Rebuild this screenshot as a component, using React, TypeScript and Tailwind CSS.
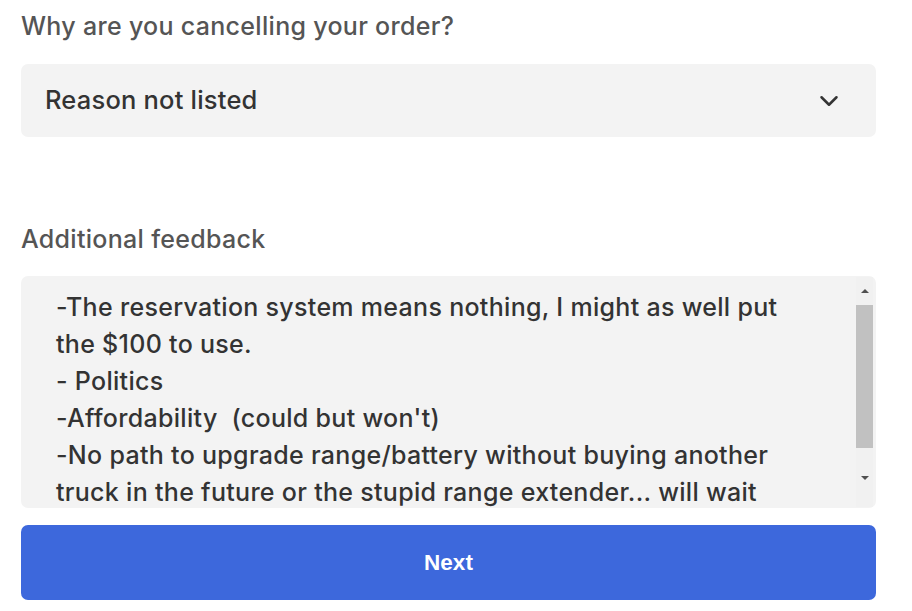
import { ChevronDown } from 'lucide-react';

const feedbackLines = [
  '-The reservation system means nothing, I might as well put',
  'the $100 to use.',
  '- Politics',
  "-Affordability  (could but won't)",
  '-No path to upgrade range/battery without buying another',
  'truck in the future or the stupid range extender... will wait',
];

export default function App() {
  return (
    <div className="w-[912px] h-[611px] bg-white overflow-hidden font-['Inter',sans-serif]">
      <div className="ml-[21px] w-[855px] pt-[6px]">
        <label className="block text-[25px] font-medium tracking-[0.3px] leading-[40px] text-[#555555]">
          Why are you cancelling your order?
        </label>

        <div className="mt-[18px] h-[73px] bg-[#f3f3f3] rounded-[7px] flex items-center justify-between pl-[24px] pr-[32px]">
          <span className="text-[25.5px] font-medium tracking-[0.2px] text-[#333333]">Reason not listed</span>
          <ChevronDown size={30} strokeWidth={2} className="text-[#333333]" />
        </div>

        <label className="block mt-[82px] text-[25px] font-medium tracking-[0.3px] leading-[40px] text-[#555555]">
          Additional feedback
        </label>

        <div className="mt-[17px] h-[232px] bg-[#f3f3f3] rounded-[7px] flex overflow-hidden">
          <div className="flex-1 pl-[35px] pt-[13px] text-[25px] font-medium tracking-[0.3px] leading-[37px] text-[#333333] whitespace-pre">
            {feedbackLines.map((line, i) => (
              <div key={i}>{line}</div>
            ))}
          </div>
          <div className="w-[17px] mr-[3px] my-[1px] flex flex-col bg-[#f1f1f1]">
            <div className="h-[28px] flex items-center justify-center">
              <div className="w-0 h-0 border-l-[4px] border-r-[4px] border-b-[4px] border-l-transparent border-r-transparent border-b-[#505050]" />
            </div>
            <div className="h-[143px] bg-[#c1c1c1]" />
            <div className="flex-1 flex items-center justify-center">
              <div className="w-0 h-0 border-l-[4px] border-r-[4px] border-t-[4px] border-l-transparent border-r-transparent border-t-[#505050]" />
            </div>
          </div>
        </div>

        <button className="mt-[17px] w-full h-[75px] rounded-[7px] bg-[#3d68dc] text-white text-[22.5px] font-bold font-['Liberation_Sans',sans-serif]">
          Next
        </button>
      </div>
    </div>
  );
}
